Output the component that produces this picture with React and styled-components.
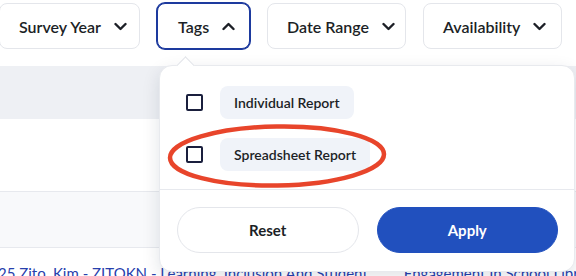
import React from 'react';
import styled, { createGlobalStyle, css } from 'styled-components';

const GlobalStyle = createGlobalStyle`
  body {
    margin: 0;
    background: #ffffff;
    font-family: Lato, "Noto Sans", sans-serif;
    color: #1c1f26;
  }
`;

const Page = styled.div`
  position: relative;
  width: 576px;
  height: 276px;
  overflow: hidden;
`;

const FilterBar = styled.div`
  display: flex;
  gap: 17px;
  padding-top: 3px;
  margin-left: -1px;
`;

const FilterWrap = styled.div`
  position: relative;
`;

const FilterButton = styled.button`
  box-sizing: border-box;
  display: flex;
  align-items: center;
  gap: 13px;
  height: 46px;
  width: ${(p) => p.$width}px;
  padding: 0 0 0 19px;
  background: #ffffff;
  border: 1px solid #e4e6eb;
  border-radius: 8px;
  font-family: Lato, sans-serif;
  font-size: 16px;
  font-weight: 600;
  color: #1c1f26;
  ${(p) =>
    p.$active &&
    css`
      border-color: #1d3a9e;
      box-shadow: 0 0 0 1px #1d3a9e;
      padding-left: 20px;
    `}
`;

const Chevron = ({ up }) => (
  <svg width="13" height="9" viewBox="0 0 13 9" fill="none">
    <path
      d={up ? 'M1.5 7L6.5 2L11.5 7' : 'M1.5 2L6.5 7L11.5 2'}
      stroke="#1c1f26"
      strokeWidth="2.4"
      strokeLinecap="round"
      strokeLinejoin="round"
    />
  </svg>
);

const Table = styled.div`
  margin-top: 17px;
`;

const Row = styled.div`
  box-sizing: border-box;
  height: ${(p) => p.$height}px;
  background: ${(p) => p.$bg || '#ffffff'};
  border-bottom: ${(p) => (p.$line ? '1px solid #e7e9ee' : 'none')};
`;

const LinkRow = styled.div`
  display: flex;
  gap: 36px;
  padding-top: 16px;
  white-space: nowrap;
  font-size: 15px;
  color: #2740ad;
  margin-left: -2px;
`;

const Popover = styled.div`
  position: absolute;
  top: 62px;
  left: 2px;
  width: 416px;
  height: 207px;
  box-sizing: border-box;
  background: #ffffff;
  border: 1px solid #e8eaee;
  border-radius: 13px;
  box-shadow: 0 6px 18px rgba(20, 30, 60, 0.12);
  z-index: 5;

  &::before {
    content: '';
    position: absolute;
    top: -7px;
    left: 19px;
    width: 12px;
    height: 12px;
    background: #ffffff;
    border-top: 1px solid #e2e4e9;
    border-left: 1px solid #e2e4e9;
    transform: rotate(45deg);
  }
`;

const OptionList = styled.div`
  display: flex;
  flex-direction: column;
  gap: 19px;
  padding: 20px 0 18px 26px;
  border-bottom: 1px solid #e7e9ee;
`;

const Option = styled.label`
  display: flex;
  align-items: center;
  gap: 17px;
`;

const Checkbox = styled.span`
  box-sizing: border-box;
  width: 17px;
  height: 17px;
  border: 2px solid #1a1f3d;
  border-radius: 2px;
`;

const Chip = styled.span`
  display: flex;
  align-items: center;
  height: 33px;
  padding: 0 14px;
  background: #f0f3f9;
  border-radius: 8px;
  font-size: 14px;
  font-weight: 600;
  color: #1c1f26;
`;

const Actions = styled.div`
  display: flex;
  gap: 18px;
  padding: 17px 16px 0 17px;
`;

const ActionButton = styled.button`
  flex: 1;
  height: 46px;
  border-radius: 23px;
  font-family: Lato, sans-serif;
  font-size: 15px;
  font-weight: 700;
  border: 1px solid ${(p) => (p.$primary ? '#2150be' : '#e4e6eb')};
  background: ${(p) => (p.$primary ? '#2150be' : '#ffffff')};
  color: ${(p) => (p.$primary ? '#ffffff' : '#1c1f26')};
`;

const Annotation = styled.svg`
  position: absolute;
  left: 6px;
  top: 56px;
  pointer-events: none;
`;

const tags = ['Individual Report', 'Spreadsheet Report'];

export default function App() {
  return (
    <Page>
      <GlobalStyle />
      <FilterBar>
        <FilterButton $width={141}>
          Survey Year <Chevron />
        </FilterButton>
        <FilterWrap>
          <FilterButton $width={93} $active>
            Tags <Chevron up />
          </FilterButton>
          <Popover>
            <OptionList>
              {tags.map((t) => (
                <Option key={t}>
                  <Checkbox />
                  <Chip>{t}</Chip>
                </Option>
              ))}
            </OptionList>
            <Actions>
              <ActionButton>Reset</ActionButton>
              <ActionButton $primary>Apply</ActionButton>
            </Actions>
            <Annotation width="222" height="68" viewBox="0 0 222 68">
              <ellipse
                cx="111"
                cy="34"
                rx="107"
                ry="29.5"
                fill="none"
                stroke="#e8452b"
                strokeWidth="4.5"
                transform="rotate(-1 111 34)"
              />
            </Annotation>
          </Popover>
        </FilterWrap>
        <FilterButton $width={139}>
          Date Range <Chevron />
        </FilterButton>
        <FilterButton $width={139}>
          Availability <Chevron />
        </FilterButton>
      </FilterBar>
      <Table>
        <Row $height={53} $bg="#eef0f4" />
        <Row $height={73} $line />
        <Row $height={56} $bg="#f8f9fb" $line />
        <LinkRow>
          <span>25 Zito, Kim - ZITOKN - Learning, Inclusion And Student</span>
          <span>Engagement In School Library</span>
        </LinkRow>
      </Table>
    </Page>
  );
}
